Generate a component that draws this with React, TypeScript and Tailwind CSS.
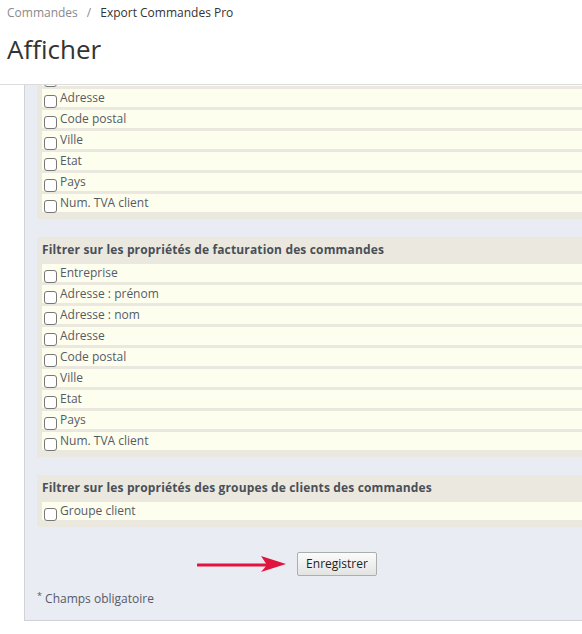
import React from "react";

const addressFields = [
  "Entreprise",
  "Adresse : prénom",
  "Adresse : nom",
  "Adresse",
  "Code postal",
  "Ville",
  "Etat",
  "Pays",
  "Num. TVA client",
];

// The first section is scrolled under the header: only its tail shows.
const sections = [
  { title: "", fields: ["", ...addressFields.slice(3)] },
  { title: "Filtrer sur les propriétés de facturation des commandes", fields: addressFields },
  { title: "Filtrer sur les propriétés des groupes de clients des commandes", fields: ["Groupe client"] },
];

function FieldRow({ label }: { label: string }) {
  return (
    <label className="flex items-start h-[18px] bg-[#fefeee] text-[12px] leading-[18px] text-[#555b66]">
      <span className="ml-[2px] mt-[6px] w-[13px] h-[13px] shrink-0 rounded-[3px] border border-[#777] bg-white" />
      <span className="ml-[3px] whitespace-nowrap">{label}</span>
    </label>
  );
}

function FilterSection({ title, fields, first }: { title: string; fields: string[]; first?: boolean }) {
  return (
    <section className={`bg-[#ebe9df] pl-[5px] pb-[7px] ${first ? "-mt-[17px]" : "mt-[18px]"}`}>
      {title && (
        <h3 className="pt-[4px] pb-[5px] text-[12px] leading-[18px] font-bold tracking-[0.15px] text-[#4a4f57] whitespace-nowrap">
          {title}
        </h3>
      )}
      <div className="flex flex-col gap-[3px]">
        {fields.map((f, i) => (
          <FieldRow key={f + i} label={f} />
        ))}
      </div>
    </section>
  );
}

export default function App() {
  return (
    <div className="w-[582px] h-[634px] overflow-hidden bg-white flex flex-col font-['Open_Sans',sans-serif]">
      {/* Page header */}
      <header className="h-[85px] shrink-0 border-b border-[#dcdcdc] px-[7px] flex flex-col">
        <nav className="pt-[3px] h-[24px] text-[12px] leading-[20px] whitespace-nowrap">
          <span className="text-[#8a8a8a]">Commandes</span>
          <span className="px-[9px] text-[#8a8a8a]">/</span>
          <span className="text-[#333]">Export Commandes Pro</span>
        </nav>
        <h1 className="mt-[6px] text-[26px] leading-[38px] text-[#333] whitespace-nowrap">Afficher</h1>
      </header>

      {/* Scrolled form */}
      <div className="flex-1 min-h-0 overflow-hidden pl-[24px]">
        <div className="w-[640px] bg-[#e9ecf3] border-l border-b border-[#cfd2d8] pl-[12px] pb-[12px]">
          {sections.map((s, i) => (
            <FilterSection key={i} title={s.title} fields={s.fields} first={i === 0} />
          ))}

          <div className="mt-[23px] flex">
            <div className="relative ml-[260px]">
              <svg
                className="absolute right-full top-[5px] mr-[10px]"
                width="90"
                height="18"
                viewBox="0 0 90 18"
              >
                <path d="M1 10 H70" stroke="#e0143c" strokeWidth="3" strokeLinecap="round" />
                <path d="M64 1 L89 9 L64 17 L70 10 Z" fill="#e0143c" />
              </svg>
              <button className="h-[24px] w-[80px] rounded-[2px] border border-[#a9b0ab] bg-gradient-to-b from-[#fbfbfb] to-[#e2e4e2] text-[12px] text-[#222]">
                Enregistrer
              </button>
            </div>
          </div>

          <p className="mt-[14px] text-[12px] leading-[18px] text-[#555b66]">
            <sup className="text-[9px]">*</sup> Champs obligatoire
          </p>
        </div>
      </div>
    </div>
  );
}
